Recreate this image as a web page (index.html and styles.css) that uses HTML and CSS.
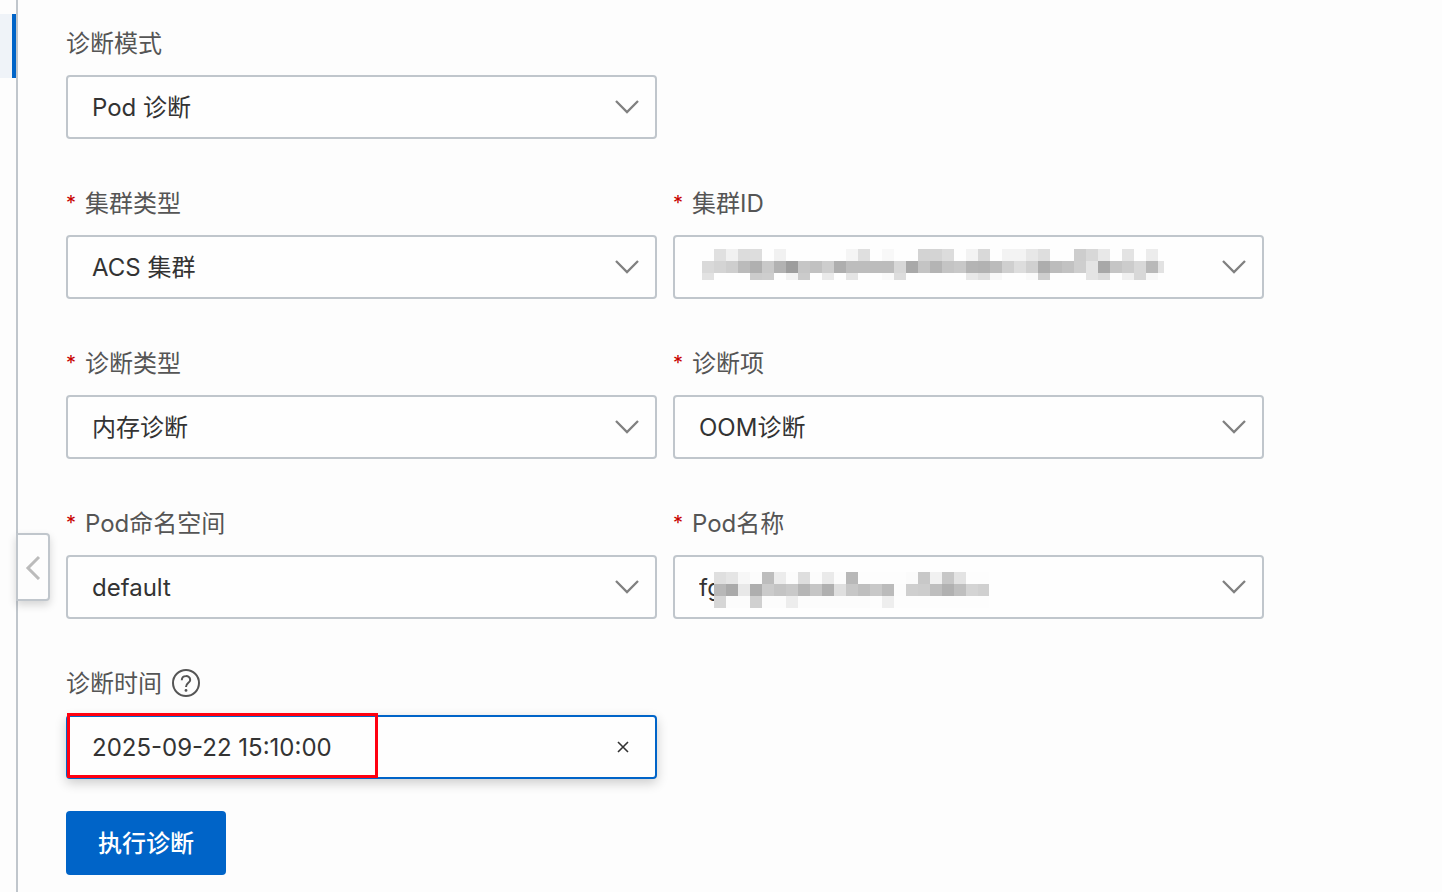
FILE: index.html
```html
<!DOCTYPE html>
<html lang="zh-CN">
<head>
    <meta charset="UTF-8">
    <meta name="viewport" content="width=device-width, initial-scale=1">
    <title>Pod 诊断</title>
    <link rel="stylesheet" href="styles.css">
</head>
<body>
    <div class="layout">
        <nav class="sidebar">
            <div class="sidebar-active"></div>
        </nav>
        <main class="content">
            <button class="collapse" type="button" aria-label="收起">
                <svg width="16" height="26" viewBox="0 0 16 26"><path d="M14 3 L3 14 L14 25"/></svg>
            </button>
            <form class="form">
                <div class="field field-first">
                    <label for="mode">诊断模式</label>
                    <div class="control">
                        <select id="mode"><option>Pod 诊断</option></select>
                        <svg class="arrow" width="24" height="16" viewBox="0 0 24 16"><path d="M1 2 L12 13 L23 2"/></svg>
                    </div>
                </div>
                <div class="field">
                    <label class="required" for="clusterType">集群类型</label>
                    <div class="control">
                        <select id="clusterType"><option>ACS 集群</option></select>
                        <svg class="arrow" width="24" height="16" viewBox="0 0 24 16"><path d="M1 2 L12 13 L23 2"/></svg>
                    </div>
                </div>
                <div class="field">
                    <label class="required" for="clusterId">集群ID</label>
                    <div class="control">
                        <select id="clusterId"><option></option></select>
                        <svg class="mask mask-cluster" id="clusterMask" width="462" height="31"></svg>
                        <svg class="arrow" width="24" height="16" viewBox="0 0 24 16"><path d="M1 2 L12 13 L23 2"/></svg>
                    </div>
                </div>
                <div class="field">
                    <label class="required" for="diagType">诊断类型</label>
                    <div class="control">
                        <select id="diagType"><option>内存诊断</option></select>
                        <svg class="arrow" width="24" height="16" viewBox="0 0 24 16"><path d="M1 2 L12 13 L23 2"/></svg>
                    </div>
                </div>
                <div class="field">
                    <label class="required" for="diagItem">诊断项</label>
                    <div class="control">
                        <select id="diagItem"><option>OOM诊断</option></select>
                        <svg class="arrow" width="24" height="16" viewBox="0 0 24 16"><path d="M1 2 L12 13 L23 2"/></svg>
                    </div>
                </div>
                <div class="field">
                    <label class="required" for="namespace">Pod命名空间</label>
                    <div class="control">
                        <select id="namespace"><option>default</option></select>
                        <svg class="arrow" width="24" height="16" viewBox="0 0 24 16"><path d="M1 2 L12 13 L23 2"/></svg>
                    </div>
                </div>
                <div class="field">
                    <label class="required" for="podName">Pod名称</label>
                    <div class="control">
                        <select id="podName"><option>fg</option></select>
                        <svg class="mask mask-pod" id="podMask" width="275" height="36"></svg>
                        <svg class="arrow" width="24" height="16" viewBox="0 0 24 16"><path d="M1 2 L12 13 L23 2"/></svg>
                    </div>
                </div>
                <div class="field">
                    <label for="time">诊断时间
                        <svg class="help" width="28" height="28" viewBox="0 0 28 28">
                            <circle cx="14" cy="14" r="13"/>
                            <path d="M9.8 11.2 C9.8 5.8 18.2 5.8 18.2 11 C18.2 14 14 13.8 14 18"/>
                            <circle class="dot" cx="14" cy="21.4" r="1.4"/>
                        </svg>
                    </label>
                    <div class="control">
                        <input class="active" type="text" id="time" value="2025-09-22 15:10:00">
                        <button class="clear" type="button" aria-label="清除">
                            <svg width="12" height="12" viewBox="0 0 12 12"><path d="M1 1 L11 11 M11 1 L1 11"/></svg>
                        </button>
                        <div class="highlight"></div>
                    </div>
                </div>
                <button class="submit" type="button">执行诊断</button>
            </form>
        </main>
    </div>
    <script>
        // grey level of each mosaic cell, one hex pair per cell, ".." is left blank
        const clusterRows = [
            '.. e0 f1 dc dd .. f1 .. .. .. .. .. f5 df .. f8 .. .. d3 d4 dc .. f3 d9 .. f3 f3 e7 de .. .. cd d8 e8 .. e3 .. ec ..',
            'd9 d4 ce bb b0 c9 b2 9d c6 c1 cd ae bd bd bc bc d7 a9 c4 b4 c4 c8 b4 b2 bb cf dd d0 ad bc c2 ce e4 a8 c5 cc d8 b9 e2',
            'e2 .. .. .. cc ce .. f3 cb .. ea .. e5 .. .. fa dd .. .. .. .. .. e8 e0 f8 .. .. fa ce .. .. .. e4 dc .. f0 d8 f8 ..'
        ];
        const podRows = [
            'df e5 f7 fc bd ec fc de fc ea fc b8 .. .. .. .. fb c8 f1 c7 e3 .. ..',
            'b8 aa e8 ae cb c4 c9 b6 c5 b0 df c7 bf c8 bb fc cf cd be b1 bf d4 d0',
            'd6 fc fc d0 fc fc ed fc fc fc fc fc fc .. ee .. .. .. .. .. .. .. ..'
        ];

        function drawMask(id, rows) {
            const size = 12;
            let cells = '';
            rows.forEach((row, y) => {
                row.split(' ').forEach((grey, x) => {
                    if (grey !== '..') {
                        cells += `<rect x="${x * size}" y="${y * size}" width="${size}" height="${size}" fill="#${grey}${grey}${grey}"/>`;
                    }
                });
            });
            document.getElementById(id).innerHTML = cells;
        }

        drawMask('clusterMask', clusterRows);
        drawMask('podMask', podRows);
    </script>
</body>
</html>
```
FILE: styles.css
```css
* {
    box-sizing: border-box;
}
body {
    margin: 0;
    background-color: #fdfdfd;
    color: #333;
    font-family: Inter, "Noto Sans CJK SC", sans-serif;
    font-size: 24px;
}
button, input, select {
    font-family: inherit;
    font-size: inherit;
    color: inherit;
}
svg {
    fill: none;
}
.layout {
    display: flex;
    min-height: 100vh;
}
.sidebar {
    flex: 0 0 18px;
    padding-top: 14px;
    border-right: 2px solid #c0c6cc;
}
.sidebar-active {
    height: 64px;
    background-color: #eff3f8;
    border-right: 4px solid #0064c8;
}
.content {
    position: relative;
    flex: 1;
    padding: 19px 48px 16px;
}
.collapse {
    position: absolute;
    left: -2px;
    top: 533px;
    display: flex;
    align-items: center;
    justify-content: center;
    width: 34px;
    height: 68px;
    padding: 0;
    background-color: #fdfdfd;
    border: 2px solid #c0c6cc;
    border-radius: 0 4px 4px 0;
    box-shadow: 0 4px 8px rgba(0, 0, 0, 0.16);
    cursor: pointer;
}
.collapse path {
    stroke: #bbb;
    stroke-width: 3;
}
.form {
    display: grid;
    grid-template-columns: 1fr 1fr;
    gap: 40px 16px;
    max-width: 1198px;
}
.field-first {
    grid-column: 1 / 3;
    width: calc(50% - 8px);
}
.field label {
    display: flex;
    align-items: center;
    height: 44px;
    margin-bottom: 12px;
    color: #555;
}
.required::before {
    content: "*";
    width: 19px;
    padding-top: 4px;
    color: #c80000;
    font-size: 20px;
}
.help {
    margin: 4px 0 0 10px;
    stroke: #555;
    stroke-width: 2;
}
.help .dot {
    fill: #555;
    stroke: none;
}
.control {
    position: relative;
}
.control select,
.control input {
    display: block;
    width: 100%;
    height: 64px;
    padding: 0 56px 0 24px;
    background-color: #fefefe;
    border: 2px solid #c0c6cc;
    border-radius: 4px;
    outline: none;
    appearance: none;
}
.control .active {
    border-color: #0064c8;
    box-shadow: 0 4px 12px rgba(0, 0, 0, 0.2);
    font-optical-sizing: none;
}
.arrow {
    position: absolute;
    right: 18px;
    top: 24px;
    stroke: #808080;
    stroke-width: 2.3;
    pointer-events: none;
}
.mask {
    position: absolute;
    pointer-events: none;
}
.mask-cluster {
    left: 29px;
    top: 14px;
}
.mask-pod {
    left: 41px;
    top: 17px;
    background-color: #fdfdfd;
}
.clear {
    position: absolute;
    right: 20px;
    top: 18px;
    display: flex;
    align-items: center;
    justify-content: center;
    width: 28px;
    height: 28px;
    padding: 0;
    background: none;
    border: none;
    cursor: pointer;
}
.clear path {
    stroke: #333;
    stroke-width: 1.6;
}
.highlight {
    position: absolute;
    left: 1px;
    top: -2px;
    width: 311px;
    height: 65px;
    border: 3px solid #ff0010;
    pointer-events: none;
}
.submit {
    grid-column: 1;
    justify-self: start;
    width: 160px;
    height: 64px;
    margin-top: -8px;
    padding: 0 0 4px;
    background-color: #0064c8;
    color: #fff;
    font-weight: 500;
    border: none;
    border-radius: 4px;
    cursor: pointer;
}
```
